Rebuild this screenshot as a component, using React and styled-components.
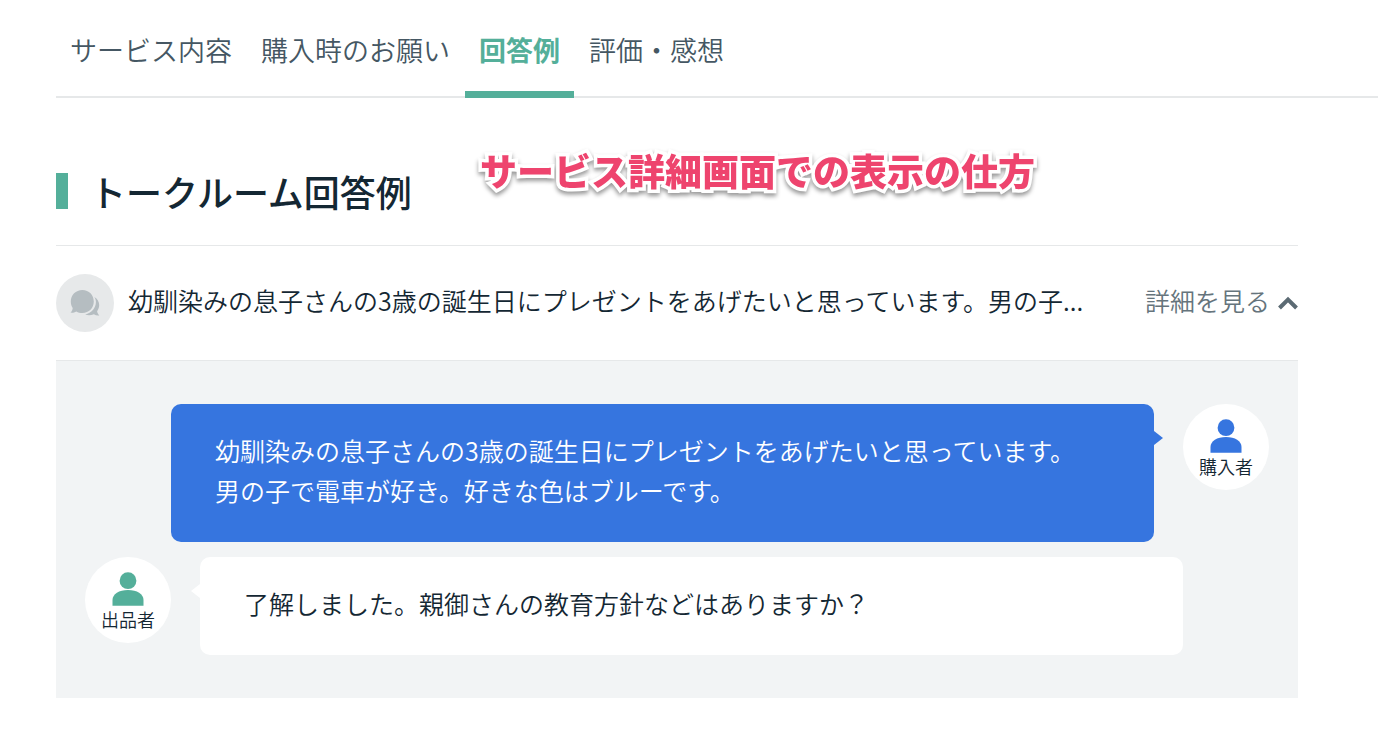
import React, { useState } from "react";
import styled, { createGlobalStyle } from "styled-components";

const color = {
  green: "#54af9a",
  blue: "#3675df",
  ink: "#142733",
  tab: "#455763",
  muted: "#65747c",
  line: "#e6e8e9",
  panel: "#f2f4f5",
  pink: "#ee446e",
};

const GlobalStyle = createGlobalStyle`
  * { box-sizing: border-box; }
  body {
    margin: 0;
    background: #fff;
    color: ${color.ink};
    font-family: "Noto Sans CJK JP", sans-serif;
    font-weight: 350;
  }
`;

const Page = styled.main`
  padding-left: 56px;
`;

const Tabs = styled.nav`
  display: flex;
  gap: 1px;
  height: 98px;
  border-bottom: 2px solid ${color.line};
`;

const Tab = styled.a`
  height: 98px;
  padding: 30px 14px 0;
  border-bottom: 7px solid ${(p) => (p.$active ? color.green : "transparent")};
  color: ${(p) => (p.$active ? color.green : color.tab)};
  font-size: 27px;
  font-weight: ${(p) => (p.$active ? 700 : 350)};
  line-height: 40px;
  text-decoration: none;
  white-space: nowrap;
`;

const Section = styled.section`
  position: relative;
  margin-right: 80px;
  padding-top: 75px;
`;

const Title = styled.h2`
  display: flex;
  align-items: center;
  margin: 0 0 36px;
  padding-left: 22px;
  border-left: 12px solid ${color.green};
  font-size: 36px;
  font-weight: 500;
  line-height: 36px;
`;

const Callout = styled.p`
  position: absolute;
  top: 48px;
  left: 424px;
  margin: 0;
  color: ${color.pink};
  font-size: 37px;
  font-weight: 900;
  line-height: 48px;
  white-space: nowrap;
  -webkit-text-stroke: 7px #fff;
  paint-order: stroke fill;
  filter: drop-shadow(0 3px 2px rgba(0, 0, 0, 0.4));
`;

const Summary = styled.div`
  display: flex;
  align-items: center;
  height: 116px;
  border: solid ${color.line};
  border-width: 1px 0;
`;

const ChatBadge = styled.span`
  display: flex;
  flex: none;
  align-items: center;
  justify-content: center;
  width: 58px;
  height: 58px;
  margin-right: 14px;
  border-radius: 50%;
  background: #e7e9ea;
`;

const Question = styled.p`
  flex: 1;
  min-width: 0;
  margin: 0;
  padding-bottom: 6px;
  overflow: hidden;
  font-size: 25px;
  line-height: 40px;
  white-space: nowrap;
`;

const Toggle = styled.button`
  display: flex;
  align-items: center;
  gap: 8px;
  padding: 0;
  border: 0;
  background: none;
  color: ${color.muted};
  font: inherit;
  font-size: 25px;
  line-height: 40px;
  white-space: nowrap;
  cursor: pointer;
`;

const ToggleLabel = styled.span`
  padding-bottom: 6px;
`;

const Thread = styled.div`
  display: flex;
  flex-direction: column;
  gap: 15px;
  padding: 43px 29px;
  background: ${color.panel};
`;

const Message = styled.div`
  display: flex;
  flex-direction: ${(p) => (p.$buyer ? "row-reverse" : "row")};
  align-items: flex-start;
  gap: 29px;
  padding-left: ${(p) => (p.$buyer ? "86px" : 0)};
  padding-right: ${(p) => (p.$buyer ? 0 : "86px")};
`;

const Avatar = styled.div`
  display: flex;
  flex: none;
  flex-direction: column;
  align-items: center;
  width: 86px;
  height: 86px;
  padding-top: 15px;
  border-radius: 50%;
  background: #fff;
  color: ${(p) => (p.$buyer ? color.blue : color.green)};
`;

const Role = styled.span`
  color: ${color.ink};
  font-size: 18px;
  line-height: 26px;
`;

const Bubble = styled.p`
  position: relative;
  flex: 1;
  margin: 0;
  padding: 26px 44px 32px;
  border-radius: 10px;
  background: ${(p) => (p.$buyer ? color.blue : "#fff")};
  color: ${(p) => (p.$buyer ? "#fff" : color.ink)};
  font-size: 25px;
  line-height: 40px;

  &::after {
    content: "";
    position: absolute;
    top: 27px;
    ${(p) => (p.$buyer ? "left: 100%" : "right: 100%")};
    border: solid transparent;
    border-width: 7px 0;
    ${(p) =>
      p.$buyer
        ? `border-left: 9px solid ${color.blue}`
        : "border-right: 9px solid #fff"};
  }
`;

const ChatIcon = () => (
  <svg width="30" height="27" viewBox="0 0 30 27" aria-hidden="true">
    <path
      fill="#b5bdc1"
      d="M24.4 7c3 1.800 4.800 4.700 4.800 8.100 0 2.400-.8 4.500-2.100 6.200.3 1.800 1 3.100 2.200 4.100-2.100.2-3.900-.2-5.400-1.200-3 1.400-6.200 1.400-8.700.3C21.500 23 25.900 18 25.900 12c0-1.800-.5-3.500-1.500-5Z"
    />
    <path
      fill="#b5bdc1"
      d="M12.400 0C19 0 23.800 5 23.800 11.500S19 23 12.400 23c-2.300 0-4.300-.5-6.100-1.600-1.700 1-3.700 1.500-5.900 1.200 1.500-1.400 2.200-2.900 2.300-4.700C1.400 16 .8 13.900.8 11.500.8 5 5.800 0 12.400 0Z"
    />
  </svg>
);

const PersonIcon = () => (
  <svg width="32" height="34" viewBox="0 0 32 34" aria-hidden="true">
    <g fill="currentColor">
      <circle cx="16" cy="8.700" r="8.400" />
      <path d="M.5 33.700V28C.5 22 7 18 16 18s15.500 4 15.500 10v5.700Z" />
    </g>
  </svg>
);

const Chevron = ({ open }) => (
  <svg width="20" height="14" viewBox="0 0 20 14" aria-hidden="true">
    <path
      d={open ? "M1.500 12 10 3.500l8.500 8.500" : "M1.500 3 10 11.500 18.500 3"}
      fill="none"
      stroke="#5b6a73"
      strokeWidth="4"
    />
  </svg>
);

const tabs = ["サービス内容", "購入時のお願い", "回答例", "評価・感想"];

const messages = [
  {
    buyer: true,
    role: "購入者",
    lines: [
      "幼馴染みの息子さんの3歳の誕生日にプレゼントをあげたいと思っています。",
      "男の子で電車が好き。好きな色はブルーです。",
    ],
  },
  {
    buyer: false,
    role: "出品者",
    lines: ["了解しました。親御さんの教育方針などはありますか？"],
  },
];

export default function App() {
  const [open, setOpen] = useState(true);
  return (
    <Page>
      <GlobalStyle />
      <Tabs>
        {tabs.map((label) => (
          <Tab key={label} href="#answers" $active={label === "回答例"}>
            {label}
          </Tab>
        ))}
      </Tabs>
      <Section id="answers">
        <Title>トークルーム回答例</Title>
        <Callout>サービス詳細画面での表示の仕方</Callout>
        <Summary>
          <ChatBadge>
            <ChatIcon />
          </ChatBadge>
          <Question>
            幼馴染みの息子さんの3歳の誕生日にプレゼントをあげたいと思っています。男の子...
          </Question>
          <Toggle
            type="button"
            aria-expanded={open}
            onClick={() => setOpen(!open)}
          >
            <ToggleLabel>詳細を見る</ToggleLabel>
            <Chevron open={open} />
          </Toggle>
        </Summary>
        {open && (
          <Thread>
            {messages.map(({ buyer, role, lines }) => (
              <Message key={role} $buyer={buyer}>
                <Avatar $buyer={buyer}>
                  <PersonIcon />
                  <Role>{role}</Role>
                </Avatar>
                <Bubble $buyer={buyer}>
                  {lines.map((line, i) => (
                    <React.Fragment key={line}>
                      {i > 0 && <br />}
                      {line}
                    </React.Fragment>
                  ))}
                </Bubble>
              </Message>
            ))}
          </Thread>
        )}
      </Section>
    </Page>
  );
}
